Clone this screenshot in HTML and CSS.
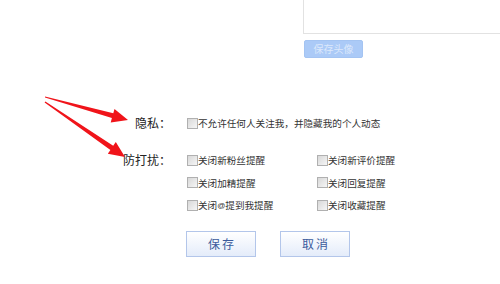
FILE: index.html
```html
<!DOCTYPE html>
<html lang="zh-CN">
<head>
    <meta charset="UTF-8">
    <title>隐私设置</title>
    <link rel="stylesheet" href="styles.css">
</head>
<body>
    <div class="avatar">
        <div class="avatar-box"></div>
        <button class="btn-avatar">保存头像</button>
    </div>

    <div class="settings">
        <div class="row privacy">
            <div class="label">隐私：</div>
            <div class="opts">
                <label class="opt"><span class="cb"></span>不允许任何人关注我，并隐藏我的个人动态</label>
            </div>
        </div>
        <div class="row dnd">
            <div class="label">防打扰：</div>
            <div class="opts grid">
                <label class="opt"><span class="cb"></span>关闭新粉丝提醒</label>
                <label class="opt"><span class="cb"></span>关闭新评价提醒</label>
                <label class="opt"><span class="cb"></span>关闭加精提醒</label>
                <label class="opt"><span class="cb"></span>关闭回复提醒</label>
                <label class="opt"><span class="cb"></span>关闭<span class="at">@</span>提到我提醒</label>
                <label class="opt"><span class="cb"></span>关闭收藏提醒</label>
            </div>
        </div>
        <div class="actions">
            <button class="btn">保存</button>
            <button class="btn">取消</button>
        </div>
    </div>

    <!-- 红色箭头标注 -->
    <svg class="arrows" width="140" height="170" viewBox="0 0 140 170">
        <polygon points="45,96.4 113.3,113.3 114.5,109 128,120 110.7,122.4 111.9,118.1 45,97.6" fill="#f0141a"/>
        <polygon points="45.4,101.5 113.2,145.8 115.8,142.1 125,157 107.8,153.7 110.4,150 44.6,102.5" fill="#f0141a"/>
    </svg>
</body>
</html>
```

FILE: styles.css
```css
* {
    margin: 0;
    padding: 0;
    box-sizing: border-box;
    font-family: "Noto Sans CJK SC", "Liberation Sans", sans-serif;
}

body {
    background: #ffffff;
    width: 500px;
    height: 284px;
    overflow: hidden;
    position: relative;
    color: #333333;
}

.avatar {
    margin-left: 303px;
}

.avatar-box {
    height: 34px;
    border-left: 1px solid #e2e2e2;
    border-bottom: 1px solid #e2e2e2;
}

.btn-avatar {
    display: block;
    margin: 6px 0 0 1px;
    width: 59px;
    height: 18px;
    border: 1px solid #a4c4f2;
    border-radius: 2px;
    background: #abcaf7;
    color: #dce8fb;
    font-size: 10px;
    line-height: 16px;
}

.settings {
    margin-top: 55px;
}

.row {
    display: flex;
}

.label {
    width: 171px;
    text-align: right;
    font-size: 12px;
    color: #222222;
    line-height: 20px;
}

.opts {
    margin-left: 15px;
}

.privacy {
    height: 20px;
}

.dnd {
    margin-top: 16px;
}

.dnd .label {
    line-height: 22px;
}

.grid {
    display: grid;
    grid-template-columns: 130px 130px;
    grid-auto-rows: 22.5px;
}

.opt {
    display: flex;
    align-items: center;
    height: 20px;
    font-size: 9.6px;
    color: #333333;
    white-space: nowrap;
}

.grid .opt {
    height: 22px;
}

.at {
    font-family: "Liberation Sans", sans-serif;
    font-size: 8px;
}

.cb {
    width: 11px;
    height: 11px;
    margin-left: 1px;
    border: 1px solid #b0b0b0;
    background: linear-gradient(135deg, #d8d8d8, #f6f6f6);
    flex-shrink: 0;
}

.actions {
    display: flex;
    gap: 24px;
    margin: 14px 0 0 186px;
}

.btn {
    width: 70px;
    height: 26px;
    border: 1px solid #b3c6ea;
    background: linear-gradient(#ffffff, #e4ecfa);
    color: #3b5b9c;
    font-size: 12px;
    letter-spacing: 2px;
    text-indent: 2px;
}

.arrows {
    position: absolute;
    left: 0;
    top: 0;
}
```
